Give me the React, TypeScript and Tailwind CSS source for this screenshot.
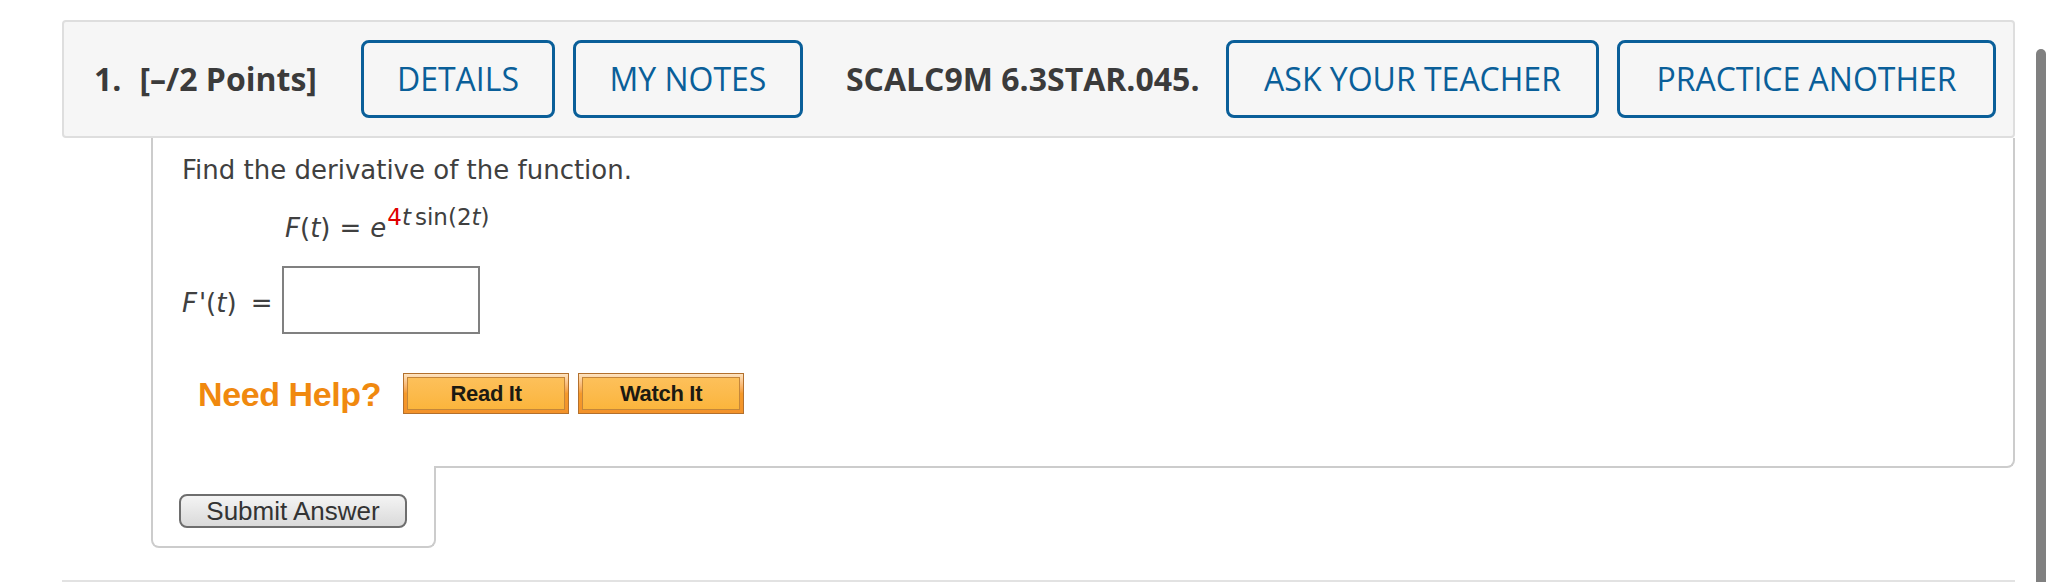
import React from "react";

const openSans = { fontFamily: '"Open Sans", "Liberation Sans", sans-serif' };

function BlueButton({ label, w }: { label: string; w: string }) {
  return (
    <div
      className={`flex h-[78px] ${w} items-center justify-center rounded-[8px] border-[3px] border-[#0a5f99] text-[32px] font-medium text-[#0a5f99]`}
      style={openSans}
    >
      {label}
    </div>
  );
}

function OrangeButton({ label }: { label: string }) {
  return (
    <div className="h-[41px] w-[166px] border border-[#b3702d] bg-gradient-to-b from-[#fde3c0] via-[#f59a2a] to-[#f3922a] p-[3px]">
      <div className="flex h-full w-full items-center justify-center border border-[#c4863a] bg-gradient-to-b from-[#fdc05a] to-[#fbb53c] pt-[1px] font-['Liberation_Sans',Arial,sans-serif] text-[22px] font-bold leading-none tracking-[-0.3px] text-[#1c1a12]">
        {label}
      </div>
    </div>
  );
}

export default function App() {
  return (
    <div className="relative h-[582px] w-[2048px] overflow-hidden bg-white">
      <div className="ml-[62px] w-[1953px] pt-[20px]">
        {/* Header bar */}
        <div className="flex h-[118px] items-center rounded-[4px] border-2 border-[#dedede] bg-[#f6f6f6] pl-[30px]">
          <div className="flex items-center text-[32px] font-bold text-[#3b3b3b]" style={openSans}>
            <span>1.</span>
            <span className="ml-[18px]">[–/2 Points]</span>
          </div>
          <div className="ml-[44px] flex items-center gap-[18px]">
            <BlueButton label="DETAILS" w="w-[194px]" />
            <BlueButton label="MY NOTES" w="w-[230px]" />
          </div>
          <div className="ml-[43px] text-[32px] font-bold text-[#3b3b3b]" style={openSans}>
            SCALC9M 6.3STAR.045.
          </div>
          <div className="ml-auto mr-[17px] flex items-center gap-[18px]">
            <BlueButton label="ASK YOUR TEACHER" w="w-[373px]" />
            <BlueButton label="PRACTICE ANOTHER" w="w-[379px]" />
          </div>
        </div>

        {/* Question body */}
        <div className="ml-[89px]">
          <div className="h-[330px] rounded-br-[8px] border-x-2 border-b-2 border-[#cccccc] pl-[29px] pt-[17px] font-['DejaVu_Sans',Verdana,sans-serif] text-[26px] leading-[30px] text-[#404040]">
            <div>Find the derivative of the function.</div>
            <div className="ml-[103px] mt-[28px] whitespace-nowrap">
              <i>F</i>(<i>t</i>)<span className="ml-[9px]">=</span>
              <i className="ml-[9px]">e</i>
              <sup className="top-[-12px] ml-[1px] text-[23px]">
                <span className="text-[#e00000]">4</span>
                <i>t</i>
                <span className="ml-[4px]">sin(2</span>
                <i>t</i>)
              </sup>
            </div>
            <div className="mt-[23px] flex items-center">
              <span className="whitespace-nowrap pt-[6px]">
                <i>F</i>
                <span className="ml-[2px]">'(</span>
                <i>t</i>)<span className="ml-[14px]">=</span>
              </span>
              <div className="ml-[10px] h-[68px] w-[198px] border-2 border-[#808080] bg-white"></div>
            </div>
            <div className="ml-[16px] mt-[39px] flex items-center">
              <span className="font-['Liberation_Sans',Arial,sans-serif] text-[34px] font-bold leading-none tracking-[-0.4px] text-[#f0890f]">
                Need Help?
              </span>
              <div className="ml-[22px] flex gap-[9px]">
                <OrangeButton label="Read It" />
                <OrangeButton label="Watch It" />
              </div>
            </div>
          </div>
          <div className="-mt-[2px] h-[82px] w-[285px] rounded-b-[8px] border-x-2 border-b-2 border-[#cccccc] bg-white pl-[26px] pt-[28px]">
            <div className="flex h-[34px] w-[228px] items-center justify-center rounded-[8px] border-2 border-[#6e6e6e] bg-gradient-to-b from-[#f4f4f4] to-[#dadada] font-['Liberation_Sans',Arial,sans-serif] text-[26px] leading-none text-[#333333]">
              Submit Answer
            </div>
          </div>
        </div>

        <div className="mt-[32px] h-[2px] bg-[#e2e2e2]"></div>
      </div>

      {/* page scrollbar */}
      <div className="absolute left-[2036px] top-[49px] bottom-0 w-[10px] rounded-t-[5px] bg-[#808080]"></div>
    </div>
  );
}
